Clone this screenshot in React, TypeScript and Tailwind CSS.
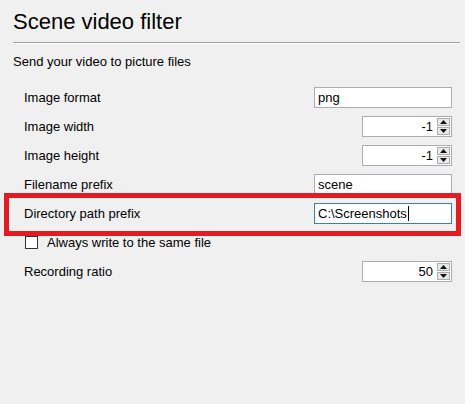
import React from "react";

const font = { fontFamily: '"Liberation Sans", Arial, sans-serif' };

function Spin({ value }: { value: string }) {
  return (
    <div className="ml-auto mr-[13px] flex h-[21px] w-[90px] border border-[#abadb3] bg-white">
      <div className="flex flex-1 items-center justify-end pr-[4px] text-[13px] text-black">{value}</div>
      <div className="my-[1px] mr-[1px] flex w-[13px] flex-col gap-[1px]">
        <div className="flex flex-1 items-center justify-center border border-[#acacac] bg-[#e9e9e9]">
          <svg width="7" height="4" viewBox="0 0 7 4"><path d="M0 4 L3.5 0 L7 4 Z" fill="#111" /></svg>
        </div>
        <div className="flex flex-1 items-center justify-center border border-[#acacac] bg-[#e9e9e9]">
          <svg width="7" height="4" viewBox="0 0 7 4"><path d="M0 0 L3.5 4 L7 0 Z" fill="#111" /></svg>
        </div>
      </div>
    </div>
  );
}

function TextBox({ value, focused }: { value: string; focused?: boolean }) {
  return (
    <div
      className={
        "ml-auto mr-[13px] flex h-[21px] w-[138px] items-center border bg-white pl-[3px] text-[13px] text-black " +
        (focused ? "border-[#3c7fb1]" : "border-[#abadb3]")
      }
    >
      <span>{value}</span>
      {focused && <span className="ml-[1px] inline-block h-[15px] w-[1px] bg-black" />}
    </div>
  );
}

export default function App() {
  return (
    <div className="h-[404px] w-[465px] overflow-hidden bg-[#f0f0f0] text-black" style={font}>
      <div className="pl-[13px] pt-[6px] text-[22px] leading-[32px]">Scene video filter</div>
      <div className="ml-[13px] mr-[5px] mt-[4px] h-[2px] border-t border-b border-t-[#a0a0a0] border-b-white" />
      <div className="pl-[13px] pt-[10px] text-[13px] leading-[16px]">Send your video to picture files</div>
      <div className="mt-[13px] flex flex-col text-[13px]">
        <div className="flex h-[29px] items-center pl-[24px]">
          <span>Image format</span>
          <TextBox value="png" />
        </div>
        <div className="flex h-[29px] items-center pl-[24px]">
          <span>Image width</span>
          <Spin value="-1" />
        </div>
        <div className="flex h-[29px] items-center pl-[24px]">
          <span>Image height</span>
          <Spin value="-1" />
        </div>
        <div className="flex h-[29px] items-center pl-[24px]">
          <span>Filename prefix</span>
          <TextBox value="scene" />
        </div>
        <div className="relative flex h-[29px] items-center pl-[24px]">
          <span>Directory path prefix</span>
          <TextBox value="C:\Screenshots" focused />
          <div className="pointer-events-none absolute left-[4px] right-[4px] top-[-6px] bottom-[-8px] border-[5px] border-[#e31b23]" />
        </div>
        <div className="flex h-[29px] items-center pl-[25px]">
          <span className="mr-[9px] inline-block h-[13px] w-[13px] border border-[#333] bg-white" />
          <span>Always write to the same file</span>
        </div>
        <div className="flex h-[29px] items-center pl-[24px]">
          <span>Recording ratio</span>
          <Spin value="50" />
        </div>
      </div>
    </div>
  );
}
